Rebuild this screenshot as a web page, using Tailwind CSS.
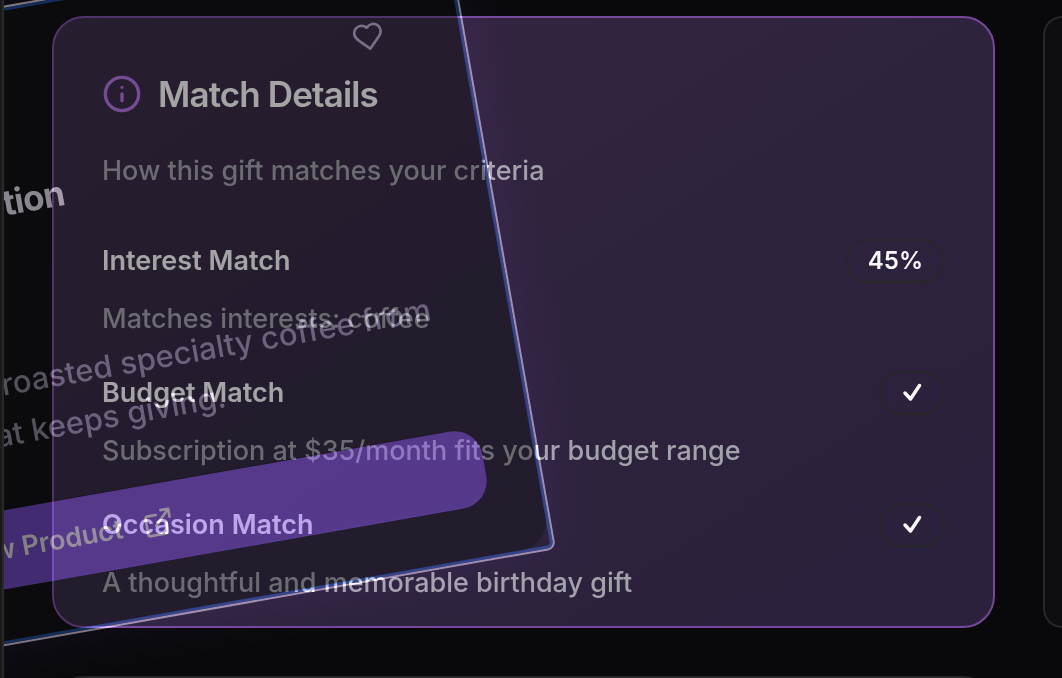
<!DOCTYPE html>
<html lang="en">
<head>
<meta charset="utf-8">
<meta name="viewport" content="width=device-width, initial-scale=1">
<title>Match Details</title>
<script src="https://cdn.jsdelivr.net/npm/@tailwindcss/browser@4"></script>
</head>
<body class="flex h-screen overflow-hidden bg-[#09090b] font-['Inter','Liberation_Sans',sans-serif]">
  <div class="w-1 shrink-0 border-r-2 border-[#2a2a28] bg-[#1a1a1b]"></div>
  <main class="relative isolate flex-1 overflow-hidden bg-[#09090b]">
    <div class="flex gap-12 pt-4 pl-12">
      <div class="flex min-w-0 flex-1 flex-col gap-12">
        <section class="rounded-[32px] border-2 border-[#75489a] bg-linear-to-br from-[#352641] via-[#2e233d] to-[#2a213c] px-12 pt-14 pb-[23px]">
          <header class="flex items-center gap-4">
            <svg class="size-10 text-[#b070e0]" viewBox="0 0 24 24" fill="none" stroke="currentColor" stroke-width="2" stroke-linecap="round" stroke-linejoin="round" aria-hidden="true"><circle cx="12" cy="12" r="10"/><path d="M12 16v-4M12 8h.01"/></svg>
            <h1 class="text-[35px] leading-10 font-semibold tracking-tight whitespace-nowrap text-[#fafafa]">Match Details</h1>
          </header>
          <p class="mt-[37px] text-[27px] leading-10 font-medium text-[#a3a1aa]">How this gift matches your criteria</p>
          <div class="mt-12 flex flex-col gap-8">
            <div>
              <div class="flex h-11 items-center justify-between">
                <h2 class="text-[27px] leading-10 font-semibold text-[#fafafa]">Interest Match</h2>
                <span class="flex h-11 items-center rounded-full border-2 border-[#27272a] px-5 text-[24px] leading-8 font-semibold text-[#fafafa]">45%</span>
              </div>
              <p class="mt-4 text-[27px] leading-10 font-medium text-[#a3a1aa]">Matches interests: coffee</p>
            </div>
            <div>
              <div class="flex h-11 items-center justify-between">
                <h2 class="text-[27px] leading-10 font-semibold text-[#fafafa]">Budget Match</h2>
                <span class="flex h-11 items-center rounded-full border-2 border-[#27272a] px-5"><svg class="size-[22px]" viewBox="0 0 22 22" fill="none" stroke="#fafafa" stroke-width="3.500" stroke-linecap="round" stroke-linejoin="round" role="img" aria-label="Matched"><path d="M4 11l5.500 6L18.500 3.500"/></svg></span>
              </div>
              <p class="mt-4 text-[27px] leading-10 font-medium text-[#a3a1aa]">Subscription at $35/month fits your budget range</p>
            </div>
            <div>
              <div class="flex h-11 items-center justify-between">
                <h2 class="text-[27px] leading-10 font-semibold text-[#fafafa]">Occasion Match</h2>
                <span class="flex h-11 items-center rounded-full border-2 border-[#27272a] px-5"><svg class="size-[22px]" viewBox="0 0 22 22" fill="none" stroke="#fafafa" stroke-width="3.500" stroke-linecap="round" stroke-linejoin="round" role="img" aria-label="Matched"><path d="M4 11l5.500 6L18.500 3.500"/></svg></span>
              </div>
              <p class="mt-4 text-[27px] leading-10 font-medium text-[#a3a1aa]">A thoughtful and memorable birthday gift</p>
            </div>
          </div>
        </section>
        <section class="h-40 rounded-[32px] border-2 border-[#27272a] bg-[#0e0e10]"></section>
      </div>
      <section class="w-[19px] shrink-0 self-start h-[612px] rounded-l-[32px] border-2 border-r-0 border-[#27272a] bg-[#0e0e10]"></section>
    </div>

    <!-- Dragged product card: shade layer -->
    <div class="pointer-events-none absolute top-[-82px] left-[-348px] flex h-[631px] w-[900px] origin-bottom-right -rotate-10 p-1">
      <div class="flex flex-1 flex-col justify-end rounded-[32px] bg-[#111112]/37 pr-[52px] pb-[53px]">
        <div class="h-[78px] rounded-[28px] bg-black/20"></div>
      </div>
    </div>
    <!-- Dragged product card: light layer -->
    <div class="absolute top-[-82px] left-[-348px] flex h-[631px] w-[900px] origin-bottom-right -rotate-10 flex-col rounded-lg border-2 border-[#746c76] pt-[76px] text-right whitespace-nowrap mix-blend-plus-lighter shadow-[0_0_60px_rgba(130,70,220,0.09),inset_0_0_0_3px_#0a2450]">
      <button type="button" aria-label="Save gift" class="mr-[78px] size-8 self-end text-[#55525a]">
        <svg viewBox="0 0 24 24" fill="none" stroke="currentColor" stroke-width="2" stroke-linecap="round" stroke-linejoin="round"><path d="M19 14c1.490-1.460 3-3.210 3-5.500A5.500 5.500 0 0 0 16.500 3c-1.760 0-3 .5-4.500 2-1.500-1.500-2.740-2-4.500-2A5.500 5.500 0 0 0 2 8.500c0 2.300 1.500 4.050 3 5.500l7 7Z"/></svg>
      </button>
      <h2 class="mt-[64px] mr-[421px] text-[35px] leading-10 font-bold tracking-tight text-[#7e7c80]">Subscription</h2>
      <p class="mt-[134px] mr-[80px] text-[31px] leading-[50px] font-medium text-[#49464f]">roasted specialty coffee from</p>
      <p class="mr-[297px] text-[31px] leading-[50px] font-medium text-[#49464f]">that keeps giving.</p>
      <button type="button" class="mt-auto mr-[54px] mb-[54px] flex h-[78px] items-center justify-end gap-5 rounded-[28px] bg-[#3a2367] pr-[315px] text-[27px] leading-10 font-semibold text-[#7a7878]">
        View Product
        <svg class="size-8" viewBox="0 0 24 24" fill="none" stroke="currentColor" stroke-width="2" stroke-linecap="round" stroke-linejoin="round" aria-hidden="true"><path d="M15 3h6v6M10 14 21 3M18 13v6a2 2 0 0 1-2 2H5a2 2 0 0 1-2-2V8a2 2 0 0 1 2-2h6"/></svg>
      </button>
    </div>
  </main>
</body>
</html>
